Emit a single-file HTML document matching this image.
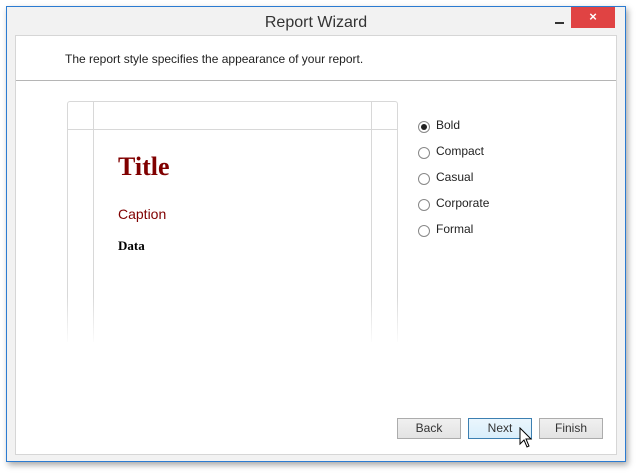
<!DOCTYPE html><html><head><style>
body{margin:0;width:636px;height:474px;background:#fff;position:relative;overflow:hidden;font-family:"Segoe UI","Liberation Sans",sans-serif;}
.win{position:absolute;left:6px;top:6px;width:620px;height:456px;border:1px solid #2b7bd1;background:#f2f2f2;box-shadow:2px 3px 6px rgba(0,0,0,.35);box-sizing:border-box;}
.t{position:absolute;left:0;right:0;top:7px;text-align:center;font-size:16px;color:#333;}
.min{position:absolute;left:548px;top:15px;width:9px;height:2px;background:#333;}
.close{position:absolute;left:564px;top:0;width:44px;height:21px;background:#e04343;color:#fff;font-size:13px;text-align:center;line-height:20px;font-weight:bold;}
.panel{position:absolute;left:8px;top:28px;width:602px;height:420px;background:#fff;border:1px solid #d6d6d6;box-sizing:border-box;}
.hd{position:absolute;left:0;right:0;top:0;height:44px;border-bottom:1px solid #b5b5b5;}
.desc{position:absolute;left:49px;top:16px;font-size:12px;color:#222;}
.prev{position:absolute;left:51px;top:65px;width:329px;height:240px;border:1px solid #d8d8d8;border-bottom:none;border-radius:3px 3px 0 0;}
.fade{position:absolute;left:45px;top:260px;width:345px;height:50px;background:linear-gradient(rgba(255,255,255,0),#fff);}
.vl{position:absolute;top:0;width:1px;height:240px;background:#d8d8d8;}
.hl{position:absolute;left:0;right:0;top:27px;height:1px;background:#d8d8d8;}
.rad{position:absolute;left:402px;font-size:12px;color:#222;}
.rad i{position:absolute;left:0;top:2px;width:12px;height:12px;border:1px solid #888;border-radius:50%;box-sizing:border-box;}
.rad span{position:absolute;left:18px;top:-1px;white-space:nowrap;}
.btn{position:absolute;top:382px;width:64px;height:21px;border:1px solid #acacac;background:linear-gradient(#f0f0f0,#e3e3e3);box-sizing:border-box;text-align:center;font-size:12px;line-height:19px;color:#333;}
</style></head><body>
<div class="win">
<div class="t">Report Wizard</div><div class="min"></div><div class="close">×</div>
<div class="panel">
<div class="hd"><div class="desc">The report style specifies the appearance of your report.</div></div>
<div class="prev">
<div class="vl" style="left:25px"></div><div class="vl" style="left:303px"></div><div class="hl"></div>
<div style="position:absolute;left:50px;top:50px;font:bold 26px 'Liberation Serif',serif;color:#800000">Title</div>
<div style="position:absolute;left:50px;top:104px;font-size:14px;color:#800000;font-family:'Liberation Sans',sans-serif">Caption</div>
<div style="position:absolute;left:50px;top:136px;font:bold 13px 'Liberation Serif',serif;color:#000">Data</div>
</div>
<div class="fade"></div>
<div class="rad" style="top:83px"><i><b style="position:absolute;left:2px;top:2px;width:6px;height:6px;border-radius:50%;background:#222"></b></i><span>Bold</span></div>
<div class="rad" style="top:109px"><i></i><span>Compact</span></div>
<div class="rad" style="top:135px"><i></i><span>Casual</span></div>
<div class="rad" style="top:161px"><i></i><span>Corporate</span></div>
<div class="rad" style="top:187px"><i></i><span>Formal</span></div>
<div class="btn" style="left:381px">Back</div>
<div class="btn" style="left:452px;border-color:#3c7fb1;background:linear-gradient(#eaf6fd,#d9eefb)">Next</div>
<div class="btn" style="left:523px">Finish</div>
<svg style="position:absolute;left:503px;top:391px" width="14" height="22" viewBox="0 0 14 22"><path d="M1 1 L1 17 L5 13 L8 20 L10 19 L7 12 L12 12 Z" fill="#fff" stroke="#000" stroke-width="1"/></svg>
</div></div>
</body></html>
